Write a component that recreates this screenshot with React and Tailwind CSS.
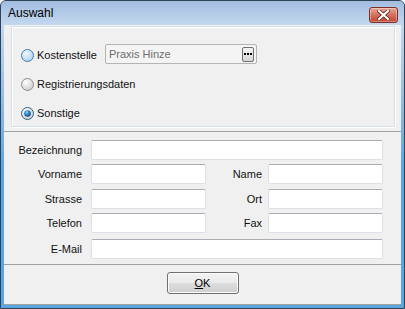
import React from 'react';

const FONT = { fontFamily: '"Liberation Sans", Arial, sans-serif' };

const Radio = ({ variant }) => {
  const ring = variant === 'hover' ? '#3c7fb1' : variant === 'checked' ? '#2c628b' : '#8e8f8f';
  return (
    <svg width="13" height="13" viewBox="0 0 13 13" className="shrink-0">
      <defs>
        <radialGradient id={`rg-${variant}`} cx="0.35" cy="0.3" r="0.8">
          <stop offset="0" stopColor={variant === 'hover' ? '#f2f8fd' : '#ffffff'} />
          <stop offset="1" stopColor={variant === 'hover' ? '#a9cfee' : '#c9c9c9'} />
        </radialGradient>
        <radialGradient id="dot" cx="0.4" cy="0.35" r="0.7">
          <stop offset="0" stopColor="#8fd8ff" />
          <stop offset="0.45" stopColor="#2f86c9" />
          <stop offset="1" stopColor="#0b3e75" />
        </radialGradient>
      </defs>
      <circle cx="6.5" cy="6.5" r="6" fill={`url(#rg-${variant})`} stroke={ring} strokeWidth="1" />
      {variant === 'checked' && <circle cx="6.5" cy="6.5" r="3.3" fill="url(#dot)" />}
    </svg>
  );
};

const Field = ({ className = '' }) => (
  <div
    className={`h-[20px] bg-white border border-[#dde1e6] border-t-[#abadb3] rounded-[2px] ${className}`}
  />
);

const Label = ({ children, className = '' }) => (
  <div className={`text-[11px] text-[#111] text-right leading-none ${className}`}>{children}</div>
);

export default function App() {
  return (
    <div className="w-[405px] h-[309px] bg-white" style={FONT}>
      <div className="w-[405px] h-[309px] flex flex-col rounded-t-[6px] border border-[#2f4257] bg-[#5aa6e0] overflow-hidden">
        {/* title bar */}
        <div className="h-[24px] shrink-0 flex items-center justify-between pl-[7px] pr-[6px] bg-gradient-to-b from-[#a3bde0] to-[#c3d8ef]">
          <span className="text-[12px] text-black">Auswahl</span>
          <div className="w-[29px] h-[16px] mt-[4px] rounded-[3px] border border-[#7d2f26] bg-gradient-to-b from-[#e8a795] via-[#d4705e] to-[#c0432f] flex items-center justify-center shadow-[inset_0_0_0_1px_rgba(255,255,255,0.35)]">
            <svg width="13" height="10" viewBox="0 0 13 10">
              <path d="M2 1 L11 9 M11 1 L2 9" stroke="#5a2018" strokeWidth="3.6" strokeLinecap="square" />
              <path d="M2 1 L11 9 M11 1 L2 9" stroke="#ffffff" strokeWidth="2.2" strokeLinecap="square" />
            </svg>
          </div>
        </div>

        {/* client area with side frames */}
        <div className="flex-1 flex px-[3px] pb-[3px] bg-gradient-to-b from-[#c3d8ef] via-[#5aa6e0] to-[#5aa6e0]">
          <div className="flex-1 flex flex-col bg-[#f0f0f0] border-b border-[#a0a0a0]">
            {/* top panel */}
            <div className="pl-[7px] pr-[6px] pt-[1px]">
              <div className="h-[101px] border border-[#d5dfe5] shadow-[1px_1px_0_#ffffff,inset_1px_1px_0_#ffffff] pl-[9px] pt-[17px] flex flex-col">
                <div className="h-[20px] flex items-center">
                  <div className="w-[84px] shrink-0 flex items-center gap-[3px] mt-[2px]">
                    <Radio variant="hover" />
                    <span className="text-[11px] text-[#111]">Kostenstelle</span>
                  </div>
                  <div className="w-[152px] h-[20px] bg-[#f4f4f4] border border-[#b5b5b5] rounded-[2px] flex items-center justify-between pl-[3px] pr-[2px]">
                    <span className="text-[11px] text-[#6d6d6d]">Praxis Hinze</span>
                    <div className="w-[12px] h-[15px] rounded-[2px] border border-[#707070] bg-gradient-to-b from-[#f6f6f6] to-[#d6d6d6] flex items-center justify-center gap-[1px]">
                      <div className="w-[2px] h-[2px] bg-black" />
                      <div className="w-[2px] h-[2px] bg-black" />
                      <div className="w-[2px] h-[2px] bg-black" />
                    </div>
                  </div>
                </div>
                <div className="h-[20px] mt-[10px] flex items-center gap-[3px]">
                  <Radio variant="normal" />
                  <span className="text-[11px] text-[#111]">Registrierungsdaten</span>
                </div>
                <div className="h-[20px] mt-[9px] flex items-center gap-[3px]">
                  <Radio variant="checked" />
                  <span className="text-[11px] text-[#111]">Sonstige</span>
                </div>
              </div>
            </div>

            {/* divider */}
            <div className="mt-[4px] h-[1px] bg-[#a0a0a0]" />

            {/* form */}
            <div className="pt-[8px] flex flex-col">
              <div className="flex items-center">
                <Label className="w-[78px]">Bezeichnung</Label>
                <Field className="ml-[9px] w-[292px]" />
              </div>
              <div className="flex items-center mt-[4px]">
                <Label className="w-[78px]">Vorname</Label>
                <Field className="ml-[9px] w-[115px]" />
                <Label className="w-[56px]">Name</Label>
                <Field className="ml-[6px] w-[115px]" />
              </div>
              <div className="flex items-center mt-[5px]">
                <Label className="w-[78px]">Strasse</Label>
                <Field className="ml-[9px] w-[115px]" />
                <Label className="w-[56px]">Ort</Label>
                <Field className="ml-[6px] w-[115px]" />
              </div>
              <div className="flex items-center mt-[4px]">
                <Label className="w-[78px]">Telefon</Label>
                <Field className="ml-[9px] w-[115px]" />
                <Label className="w-[56px]">Fax</Label>
                <Field className="ml-[6px] w-[115px]" />
              </div>
              <div className="flex items-center mt-[6px]">
                <Label className="w-[78px]">E-Mail</Label>
                <Field className="ml-[9px] w-[292px]" />
              </div>
            </div>

            {/* divider */}
            <div className="mt-[5px] h-[1px] bg-[#a0a0a0]" />

            {/* buttons */}
            <div className="flex-1 flex justify-center pt-[7px]">
              <button className="w-[72px] h-[22px] rounded-[3px] border border-[#707070] bg-[linear-gradient(#f2f2f2_0%,#ebebeb_50%,#dddddd_51%,#cfcfcf_100%)] shadow-[inset_0_0_0_1px_#fcfcfc] text-[11px] text-black flex items-center justify-center">
                <span><span className="underline">O</span>K</span>
              </button>
            </div>
          </div>
        </div>
      </div>
    </div>
  );
}
